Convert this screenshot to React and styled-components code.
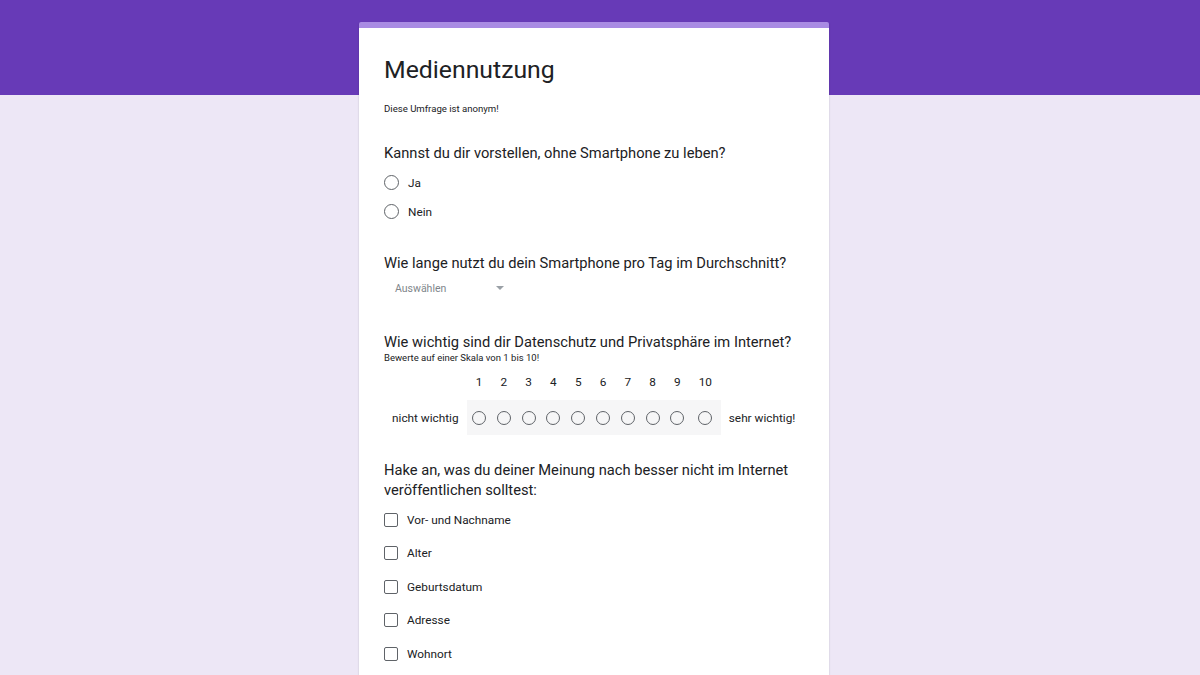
import React from 'react'
import styled, { createGlobalStyle } from 'styled-components'

const GlobalStyle = createGlobalStyle`
  html, body {
    margin: 0;
    padding: 0;
    height: 100%;
    overflow: hidden;
  }
  body {
    font-family: Roboto, "Liberation Sans", Arial, sans-serif;
    background: linear-gradient(to bottom, #673ab7 0, #673ab7 95px, #ede7f6 95px);
    color: #202124;
  }
`

const Page = styled.div`
  display: flex;
  justify-content: center;
  padding: 22px 12px 0 0;
  min-height: 675px;
  box-sizing: border-box;
`

const Card = styled.div`
  width: 470px;
  background: #fff;
  border-top: 6px solid #a98be3;
  border-radius: 2px 2px 0 0;
  box-shadow: 0 1px 2px rgba(0,0,0,0.2);
  padding: 26px 25px 0 25px;
  box-sizing: border-box;
`

const Title = styled.h1`
  margin: 0;
  font-size: 24.8px;
  line-height: 32px;
  font-weight: 400;
  color: #202124;
`

const Description = styled.p`
  margin: 16px 0 0;
  font-size: 9.6px;
  line-height: 14px;
  color: #202124;
`

const Question = styled.section`
  margin-top: ${p => p.$gap || 28}px;
`

const QTitle = styled.h2`
  margin: 0;
  font-size: 14.7px;
  line-height: 20px;
  font-weight: 400;
  color: #202124;
`

const Hint = styled.div`
  font-size: 9.5px;
  line-height: 12px;
  color: #202124;
`

const OptionList = styled.div`
  display: flex;
  flex-direction: column;
  margin-top: ${p => p.$top || 5}px;
`

const Option = styled.label`
  display: flex;
  align-items: center;
  gap: 9px;
  height: ${p => p.$h || 29}px;
  font-size: 11.8px;
  color: #202124;
`

const Radio = styled.span`
  display: inline-block;
  width: ${p => p.$size || 15}px;
  height: ${p => p.$size || 15}px;
  border: 1.6px solid #5f6368;
  border-radius: 50%;
  box-sizing: border-box;
  flex-shrink: 0;
`

const Checkbox = styled.span`
  display: inline-block;
  width: 14px;
  height: 14px;
  border: 1.6px solid #5f6368;
  border-radius: 2px;
  box-sizing: border-box;
  flex-shrink: 0;
`

const Select = styled.div`
  display: flex;
  align-items: center;
  height: 20px;
  margin-top: 5px;
  padding-left: 11px;
  width: 109px;
  font-size: 10.5px;
  color: #80868b;
`

const Caret = styled.span`
  margin-left: auto;
  width: 0;
  height: 0;
  border-left: 4px solid transparent;
  border-right: 4px solid transparent;
  border-top: 4px solid #9aa0a6;
`

const Scale = styled.div`
  display: flex;
  align-items: flex-end;
  margin-top: 6px;
`

const ScaleLabel = styled.div`
  height: 35px;
  display: flex;
  align-items: center;
  padding: 0 ${p => p.$right ? 0 : 8}px 0 8px;
  font-size: 11.8px;
  color: #202124;
`

const ScaleCol = styled.div`
  display: flex;
  flex-direction: column;
  align-items: center;
  width: ${p => p.$w}px;
`

const ScaleNum = styled.div`
  height: 24px;
  line-height: 24px;
  margin-bottom: 6px;
  font-size: 11.8px;
  color: #202124;
`

const ScaleCell = styled.div`
  align-self: stretch;
  height: 35px;
  background: #f6f6f7;
  display: flex;
  align-items: center;
  justify-content: center;
`

const questions = {
  media: ['Vor- und Nachname', 'Alter', 'Geburtsdatum', 'Adresse', 'Wohnort']
}

function App() {
  const nums = [1, 2, 3, 4, 5, 6, 7, 8, 9, 10]
  return (
    <>
      <GlobalStyle />
      <Page>
        <Card>
          <Title>Mediennutzung</Title>
          <Description>Diese Umfrage ist anonym!</Description>

          <Question $gap={27}>
            <QTitle>Kannst du dir vorstellen, ohne Smartphone zu leben?</QTitle>
            <OptionList $top={5}>
              <Option><Radio />Ja</Option>
              <Option><Radio />Nein</Option>
            </OptionList>
          </Question>

          <Question $gap={27}>
            <QTitle>Wie lange nutzt du dein Smartphone pro Tag im Durchschnitt?</QTitle>
            <Select>Auswählen<Caret /></Select>
          </Question>

          <Question $gap={34}>
            <QTitle>Wie wichtig sind dir Datenschutz und Privatsphäre im Internet?</QTitle>
            <Hint>Bewerte auf einer Skala von 1 bis 10!</Hint>
            <Scale>
              <ScaleLabel>nicht wichtig</ScaleLabel>
              {nums.map(n => (
                <ScaleCol key={n} $w={n === 10 ? 31 : 24.8}>
                  <ScaleNum>{n}</ScaleNum>
                  <ScaleCell><Radio $size={14} /></ScaleCell>
                </ScaleCol>
              ))}
              <ScaleLabel $right>sehr wichtig!</ScaleLabel>
            </Scale>
          </Question>

          <Question $gap={25}>
            <QTitle>Hake an, was du deiner Meinung nach besser nicht im Internet veröffentlichen solltest:</QTitle>
            <OptionList $top={3}>
              {questions.media.map(item => (
                <Option key={item} $h={33.5}><Checkbox />{item}</Option>
              ))}
            </OptionList>
          </Question>
        </Card>
      </Page>
    </>
  )
}

export default App
